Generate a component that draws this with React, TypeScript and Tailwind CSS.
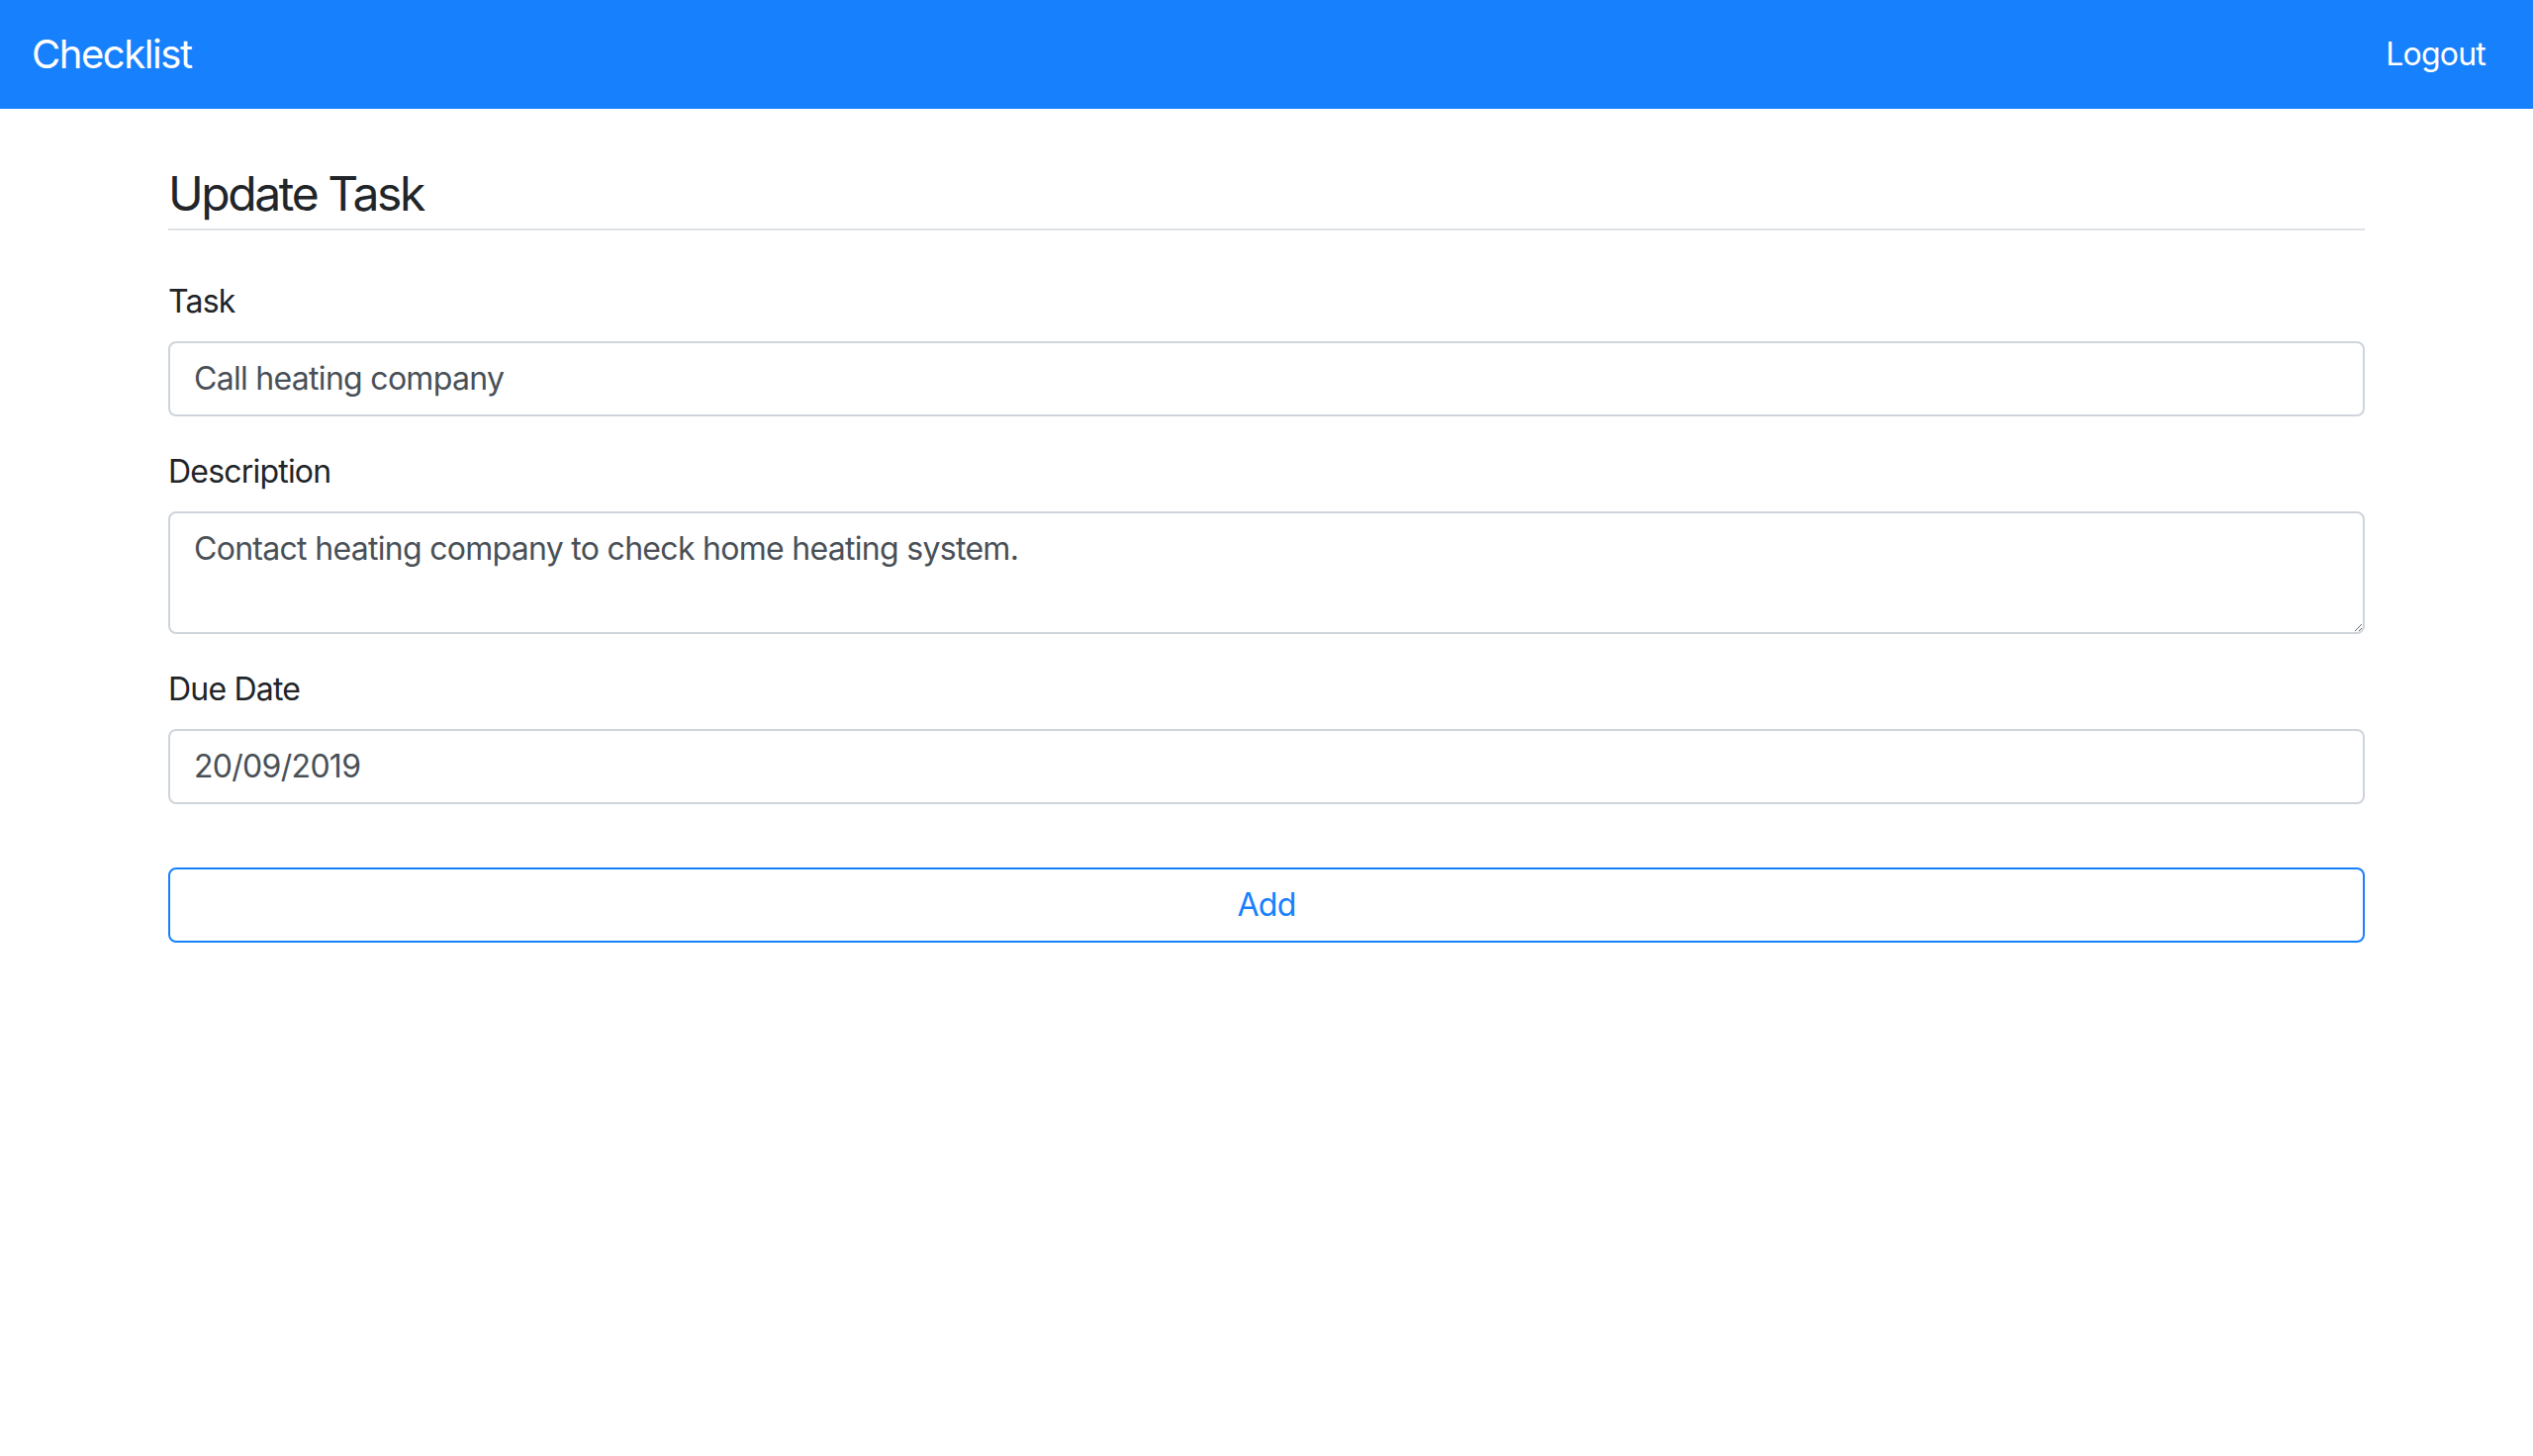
import React, { useState } from "react";

const font = { fontFamily: "Inter, 'Liberation Sans', sans-serif" };

export default function App() {
  const [task, setTask] = useState("Call heating company");
  const [desc, setDesc] = useState("Contact heating company to check home heating system.");
  const [due, setDue] = useState("20/09/2019");

  const inputCls =
    "block w-full h-[76px] px-[24px] border-2 border-[#ced4da] rounded-[8px] bg-white text-[32px] tracking-[-0.022em] text-[#495057] outline-none";
  const labelCls = "block text-[32px] leading-[48px] tracking-[-0.025em] text-[#212529] mb-[16px]";

  return (
    <div className="min-h-screen bg-white" style={font}>
      {/* Navbar */}
      <nav className="h-[110px] bg-[#1780fc] flex items-center justify-between pl-[32px] pr-[48px]">
        <span className="text-[40px] tracking-[-0.036em] text-white leading-none">Checklist</span>
        <a className="text-[32px] tracking-[-0.025em] text-white leading-none cursor-pointer">Logout</a>
      </nav>

      <div className="w-[2220px] mx-auto">
        <h4 className="mt-[57px] text-[48px] leading-[1.2] tracking-[-0.05em] text-[#212529] pb-[6px] border-b-2 border-[#dee2e6]">
          Update Task
        </h4>

        <form className="mt-[48px]" onSubmit={e => e.preventDefault()}>
          <div className="mb-[32px]">
            <label className={labelCls}>Task</label>
            <input type="text" value={task} onChange={e => setTask(e.target.value)} className={inputCls} style={font} />
          </div>

          <div className="mb-[32px]">
            <label className={labelCls}>Description</label>
            <textarea value={desc} onChange={e => setDesc(e.target.value)}
              className="block w-full h-[124px] px-[24px] py-[12px] border-2 border-[#ced4da] rounded-[8px] text-[32px] leading-[48px] tracking-[-0.022em] text-[#495057] outline-none resize-y"
              style={font} />
          </div>

          <div className="mb-[64px]">
            <label className={labelCls}>Due Date</label>
            <input type="text" value={due} onChange={e => setDue(e.target.value)} className={inputCls} style={font} />
          </div>

          <button type="submit"
            className="block w-full h-[76px] border-2 border-[#1780fc] rounded-[8px] text-[32px] tracking-[-0.022em] text-[#1780fc] bg-white"
            style={font}>
            Add
          </button>
        </form>
      </div>
    </div>
  );
}
